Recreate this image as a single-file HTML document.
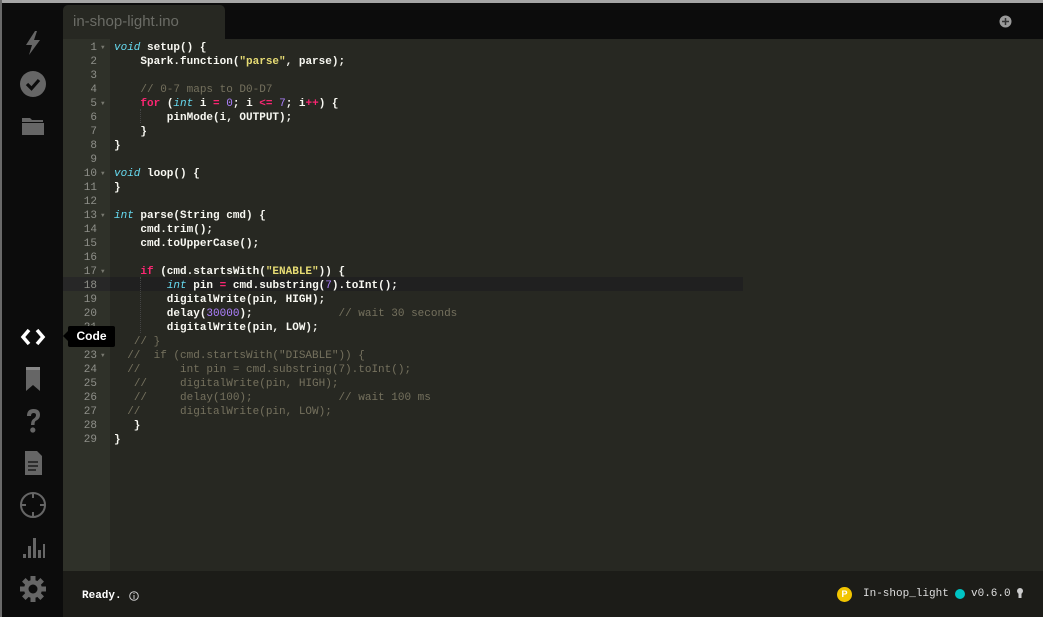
<!DOCTYPE html>
<html><head><meta charset="utf-8"><style>
*{margin:0;padding:0;box-sizing:border-box}
body{width:1043px;height:617px;background:#0c0c0c;position:relative;overflow:hidden;font-family:"Liberation Mono",monospace}
.topb{position:absolute;left:0;top:0;width:1043px;height:3px;background:#a6a6a6}
.leftb{position:absolute;left:0;top:0;width:2px;height:617px;background:#6a6a6a}
.side{position:absolute;left:2px;top:3px;width:61px;height:614px;background:#0c0c0c}
.ico{position:absolute;left:16px;width:30px;height:30px}
.tab{position:absolute;left:63px;top:5px;width:162px;height:36px;background:#272822;border-radius:5px 5px 0 0;color:#6b6c66;font:15px "Liberation Sans",sans-serif;padding:8px 0 0 10px}
.ed{position:absolute;left:63px;top:39px;width:980px;height:532px;background:#272822}
.gut{position:absolute;left:63px;top:39px;width:47px;height:532px;background:#2f3129}
.hl{position:absolute;top:277px;height:14px;background:#202020}
.ln{position:absolute;left:63px;width:34px;text-align:right;color:#8f908a;font-size:11px;line-height:14px}
.fd{position:absolute;left:101px;color:#77786f;font-size:6px;line-height:14px}
.code{position:absolute;left:114px;top:41px;font-size:11px;line-height:14px;color:#f8f8f2;white-space:pre;font-weight:bold}
.k{color:#f92672}.t{color:#66d9ef;font-style:italic;font-weight:normal}.s{color:#e6db74}.n{color:#ae81ff;font-weight:normal}.c{color:#75715e;font-weight:normal}
.guide{position:absolute;border-left:1px dotted #444;width:0}
.status{position:absolute;left:63px;top:571px;width:980px;height:46px;background:#1c1c18}
.tip{position:absolute;left:68px;top:326px;width:47px;height:21px;background:#000;color:#fff;font:bold 12px "Liberation Sans",sans-serif;line-height:21px;text-align:center;border-radius:2px}
.tip:before{content:"";position:absolute;left:-5px;top:5px;border:5px solid transparent;border-left:0;border-right-color:#000}
</style></head><body>
<div class="topb"></div><div class="leftb"></div>
<div class="side">
<svg class="ico" style="top:25px" viewBox="0 0 30 30"><path d="M17 3 L8 17 H14 L11 27 L22 12 H16 L19 3Z" fill="#666"/></svg>
<svg class="ico" style="top:66px" viewBox="0 0 30 30"><circle cx="15" cy="15" r="13" fill="#666"/><path d="M9 15 L13.5 19.5 L21 11" stroke="#0c0c0c" stroke-width="3.2" fill="none"/></svg>
<svg class="ico" style="top:108px" viewBox="0 0 30 30"><path d="M4 7 H12 L14 9 H25 V11 H4Z M4 12 H26 V24 H4Z" fill="#666"/></svg>
<svg class="ico" style="top:319px" viewBox="0 0 30 30"><path d="M11 8 L5 15 L11 22 M19 8 L25 15 L19 22" stroke="#fff" stroke-width="3.5" fill="none"/></svg>
<svg class="ico" style="top:361px" viewBox="0 0 30 30"><path d="M8 3 H22 V27 L15 21 L8 27Z" fill="#666"/><rect x="8" y="3" width="14" height="3" fill="#888"/></svg>
<svg class="ico" style="top:403px" viewBox="0 0 30 30"><path d="M9 10 Q9 3 15.5 3 Q22 3 22 9 Q22 13 17.5 15 Q16.5 16 16.5 19 H13 Q13 14 16 12.5 Q18 11 18 9 Q18 7 15.5 7 Q13 7 13 10Z" fill="#666"/><circle cx="14.8" cy="24" r="2.6" fill="#666"/></svg>
<svg class="ico" style="top:445px" viewBox="0 0 30 30"><path d="M7 3 H19 L24 8 V27 H7Z" fill="#666"/><path d="M10 14 H20 M10 18 H20 M10 22 H18" stroke="#0c0c0c" stroke-width="1.3"/></svg>
<svg class="ico" style="top:487px" viewBox="0 0 30 30"><circle cx="15" cy="15" r="12" stroke="#666" stroke-width="2" fill="none"/><path d="M15 3 V8 M15 22 V27 M3 15 H8 M22 15 H27" stroke="#666" stroke-width="2"/></svg>
<svg class="ico" style="top:529px" viewBox="0 0 30 30"><path d="M5 22 H8 V26 H5Z M10 14 H13 V26 H10Z M15 6 H18 V26 H15Z M20 18 H23 V26 H20Z M25 12 H27 V26 H25Z" fill="#666"/></svg>
<svg class="ico" style="top:571px" viewBox="0 0 30 30"><g fill="#666" transform="translate(15 15)"><circle r="9"/><rect x="-2.5" y="-13" width="5" height="26"/><rect x="-2.5" y="-13" width="5" height="26" transform="rotate(45)"/><rect x="-2.5" y="-13" width="5" height="26" transform="rotate(90)"/><rect x="-2.5" y="-13" width="5" height="26" transform="rotate(135)"/></g><circle cx="15" cy="15" r="4.5" fill="#0c0c0c"/></svg>
</div>
<div class="tab">in-shop-light.ino</div>
<svg style="position:absolute;left:999px;top:15px" width="13" height="13" viewBox="0 0 13 13"><circle cx="6.5" cy="6.5" r="6" fill="#9a9a9a"/><path d="M6.5 3 V10 M3 6.5 H10" stroke="#333" stroke-width="1.5"/></svg>
<div class="ed"></div><div class="gut"></div>
<div class="hl" style="left:63px;width:47px;background:#272727"></div>
<div class="hl" style="left:110px;width:633px"></div>
<div class="guide" style="left:140px;top:109px;height:14px"></div>
<div class="guide" style="left:140px;top:277px;height:56px"></div>
<div id="g"></div>
<div class="code"><span class="t">void</span> setup() {
    Spark.function(<span class="s">"parse"</span>, parse);

    <span class="c">// 0-7 maps to D0-D7</span>
    <span class="k">for</span> (<span class="t">int</span> i <span class="k">=</span> <span class="n">0</span>; i <span class="k">&lt;=</span> <span class="n">7</span>; i<span class="k">++</span>) {
        pinMode(i, OUTPUT);
    }
}

<span class="t">void</span> loop() {
}

<span class="t">int</span> parse(String cmd) {
    cmd.trim();
    cmd.toUpperCase();

    <span class="k">if</span> (cmd.startsWith(<span class="s">"ENABLE"</span>)) {
        <span class="t">int</span> pin <span class="k">=</span> cmd.substring(<span class="n">7</span>).toInt();
        digitalWrite(pin, HIGH);
        delay(<span class="n">30000</span>);             <span class="c">// wait 30 seconds</span>
        digitalWrite(pin, LOW);
   <span class="c">// }</span>
  <span class="c">//  if (cmd.startsWith("DISABLE")) {</span>
  <span class="c">//      int pin = cmd.substring(7).toInt();</span>
   <span class="c">//     digitalWrite(pin, HIGH);</span>
   <span class="c">//     delay(100);             // wait 100 ms</span>
  <span class="c">//      digitalWrite(pin, LOW);</span>
   }
}</div>
<script>
var f=[1,5,10,13,17,23],h='';
for(var i=1;i<=29;i++){var y=41+(i-1)*14;h+='<div class="ln" style="top:'+y+'px">'+i+'</div>';if(f.indexOf(i)>=0)h+='<div class="fd" style="top:'+y+'px">&#9660;</div>';}
document.getElementById('g').innerHTML=h;
</script>
<div class="tip">Code</div>
<div class="status">
<div style="position:absolute;left:19px;top:19px;color:#fff;font-size:11px;font-weight:bold">Ready.</div>
<svg style="position:absolute;left:66px;top:20px" width="10" height="10" viewBox="0 0 10 10"><circle cx="5" cy="5" r="4.3" stroke="#ccc" fill="none"/><path d="M5 4 V8 M5 2 V3" stroke="#ccc"/></svg>
<div style="position:absolute;left:774px;top:16px;width:15px;height:15px;border-radius:50%;background:#f2c500;color:#fff;font:bold 9px 'Liberation Sans',sans-serif;text-align:center;line-height:15px">P</div>
<div style="position:absolute;left:800px;top:17px;color:#ddd;font-size:11px">In-shop_light</div>
<div style="position:absolute;left:892px;top:18px;width:10px;height:10px;border-radius:50%;background:#00c4c4"></div>
<div style="position:absolute;left:908px;top:17px;color:#ddd;font-size:11px">v0.6.0</div>
<svg style="position:absolute;left:954px;top:17px" width="6" height="11" viewBox="0 0 6 11"><circle cx="3" cy="3" r="3" fill="#ccc"/><rect x="1.5" y="5" width="3" height="5" fill="#ccc"/></svg>
</div>
</body></html>
